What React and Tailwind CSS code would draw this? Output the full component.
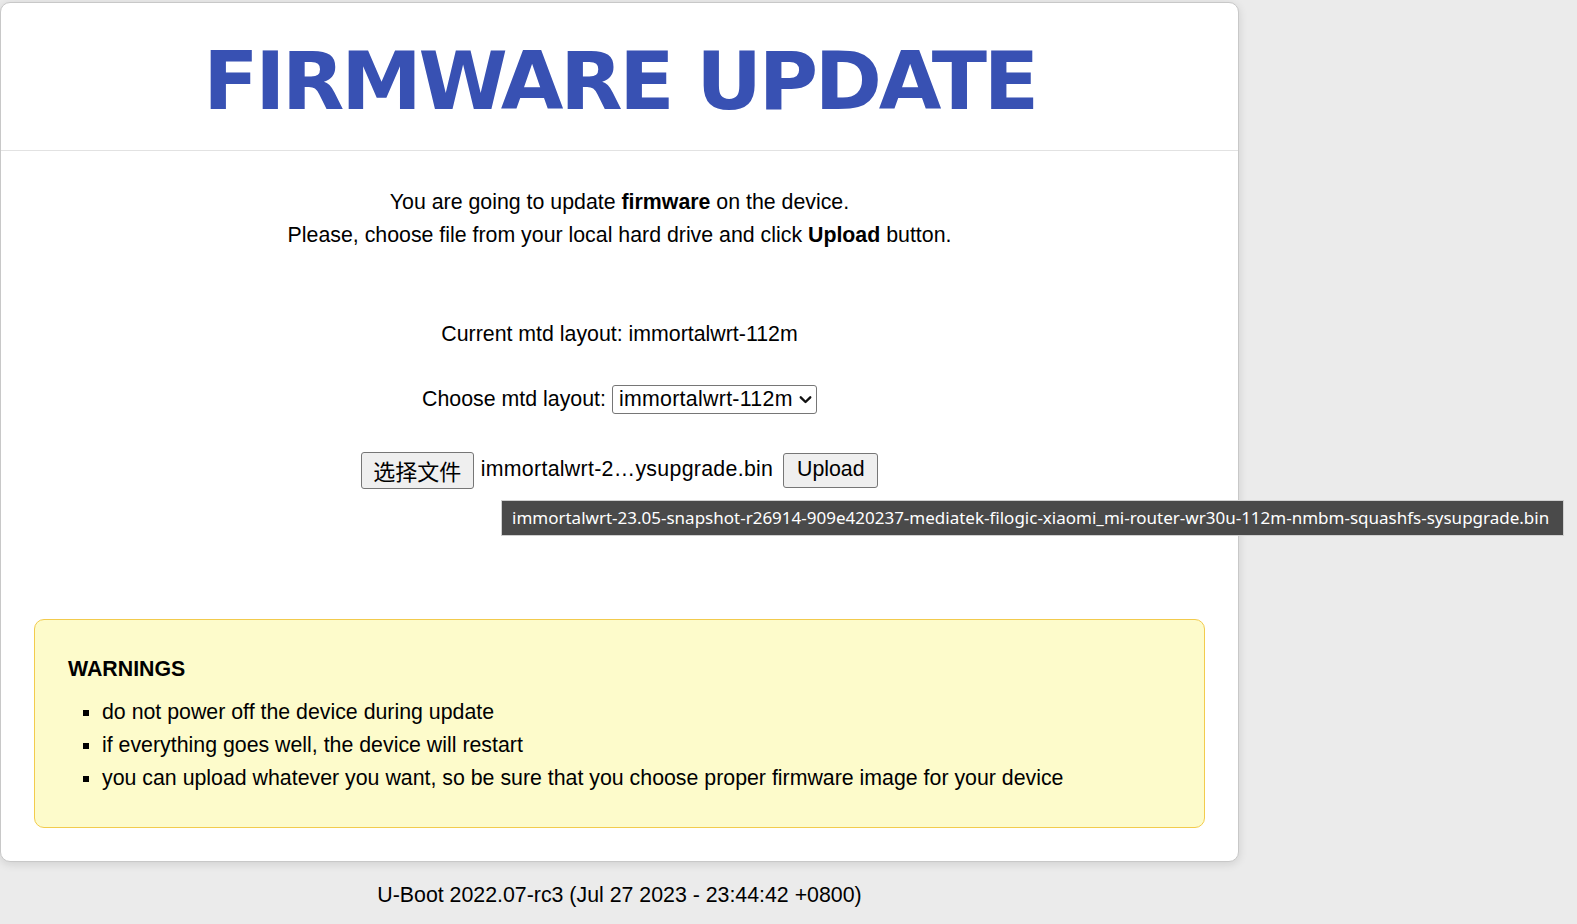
import React from "react";

export default function App() {
  return (
    <div className="relative min-h-[924px] w-full bg-[#ebebeb] text-black">
      <div className="w-[1239px] pt-[2px] font-['Liberation_Sans',Arial,sans-serif] text-[21.33px]">
        <div className="overflow-hidden rounded-[10px] border border-[#c8c8c8] bg-white shadow-[0_2px_10px_rgba(0,0,0,0.12)]">
          <div className="flex h-[148px] items-center justify-center border-b border-[#e2e2e2] pt-[9px]">
            <h1 className="font-['DejaVu_Sans',Verdana,sans-serif] text-[81px] font-bold leading-none tracking-[-3.3px] text-[#3851b3]">
              FIRMWARE UPDATE
            </h1>
          </div>
          <div className="flex flex-col items-center px-[33px] pb-[33px] pt-[35px]">
            <p className="text-center leading-[33px]">
              You are going to update <b>firmware</b> on the device.
              <br />
              Please, choose file from your local hard drive and click <b>Upload</b> button.
            </p>
            <p className="mt-[66px] leading-[33px]">Current mtd layout: immortalwrt-112m</p>
            <div className="mt-[32px] flex h-[33px] items-center">
              <span>Choose mtd layout:</span>
              <div className="ml-[6px] flex h-[29px] w-[205px] items-center justify-between rounded-[3px] border border-[#767676] bg-white pl-[6px] pr-[3px]">
                <span className="leading-none tracking-[0.3px]">immortalwrt-112m</span>
                <svg width="15" height="15" viewBox="0 0 12 12" fill="none" stroke="#111" strokeWidth="1.9" strokeLinecap="round" strokeLinejoin="round">
                  <path d="M2.2 4.3 L6 8 L9.8 4.3" />
                </svg>
              </div>
            </div>
            <div className="mt-[34px] flex h-[40px] items-center">
              <button className="flex h-[37px] w-[113px] items-center justify-center rounded-[3px] border border-[#767676] bg-[#efefef] font-['Noto_Sans_CJK_SC',sans-serif] text-[22px] leading-none">
                选择文件
              </button>
              <span className="ml-[7px] tracking-[0.3px]">immortalwrt-2…ysupgrade.bin</span>
              <button className="ml-[10px] flex h-[35px] w-[95px] items-center justify-center rounded-[3px] border border-[#767676] bg-[#efefef] leading-none">
                Upload
              </button>
            </div>
            <div className="mt-[129px] w-full rounded-[10px] border border-[#f2cb4d] bg-[#fdfbcb] pb-[32px] pl-[33px] pr-[33px] pt-[33px]">
              <h3 className="font-bold leading-[33px]">WARNINGS</h3>
              <ul className="mt-[10px] list-[square] pl-[34px] leading-[33px]">
                <li>do not power off the device during update</li>
                <li>if everything goes well, the device will restart</li>
                <li>you can upload whatever you want, so be sure that you choose proper firmware image for your device</li>
              </ul>
            </div>
          </div>
        </div>
        <div className="mt-[17px] text-center leading-[33px]">U-Boot 2022.07-rc3 (Jul 27 2023 - 23:44:42 +0800)</div>
      </div>
      <div className="absolute left-[501px] top-[500px] flex h-[36px] w-[1063px] items-center border border-[#d0d0d0] bg-[#4a4a4a] pl-[10px] font-['Noto_Sans',sans-serif] text-[17px] text-white whitespace-nowrap">
        immortalwrt-23.05-snapshot-r26914-909e420237-mediatek-filogic-xiaomi_mi-router-wr30u-112m-nmbm-squashfs-sysupgrade.bin
      </div>
    </div>
  );
}
